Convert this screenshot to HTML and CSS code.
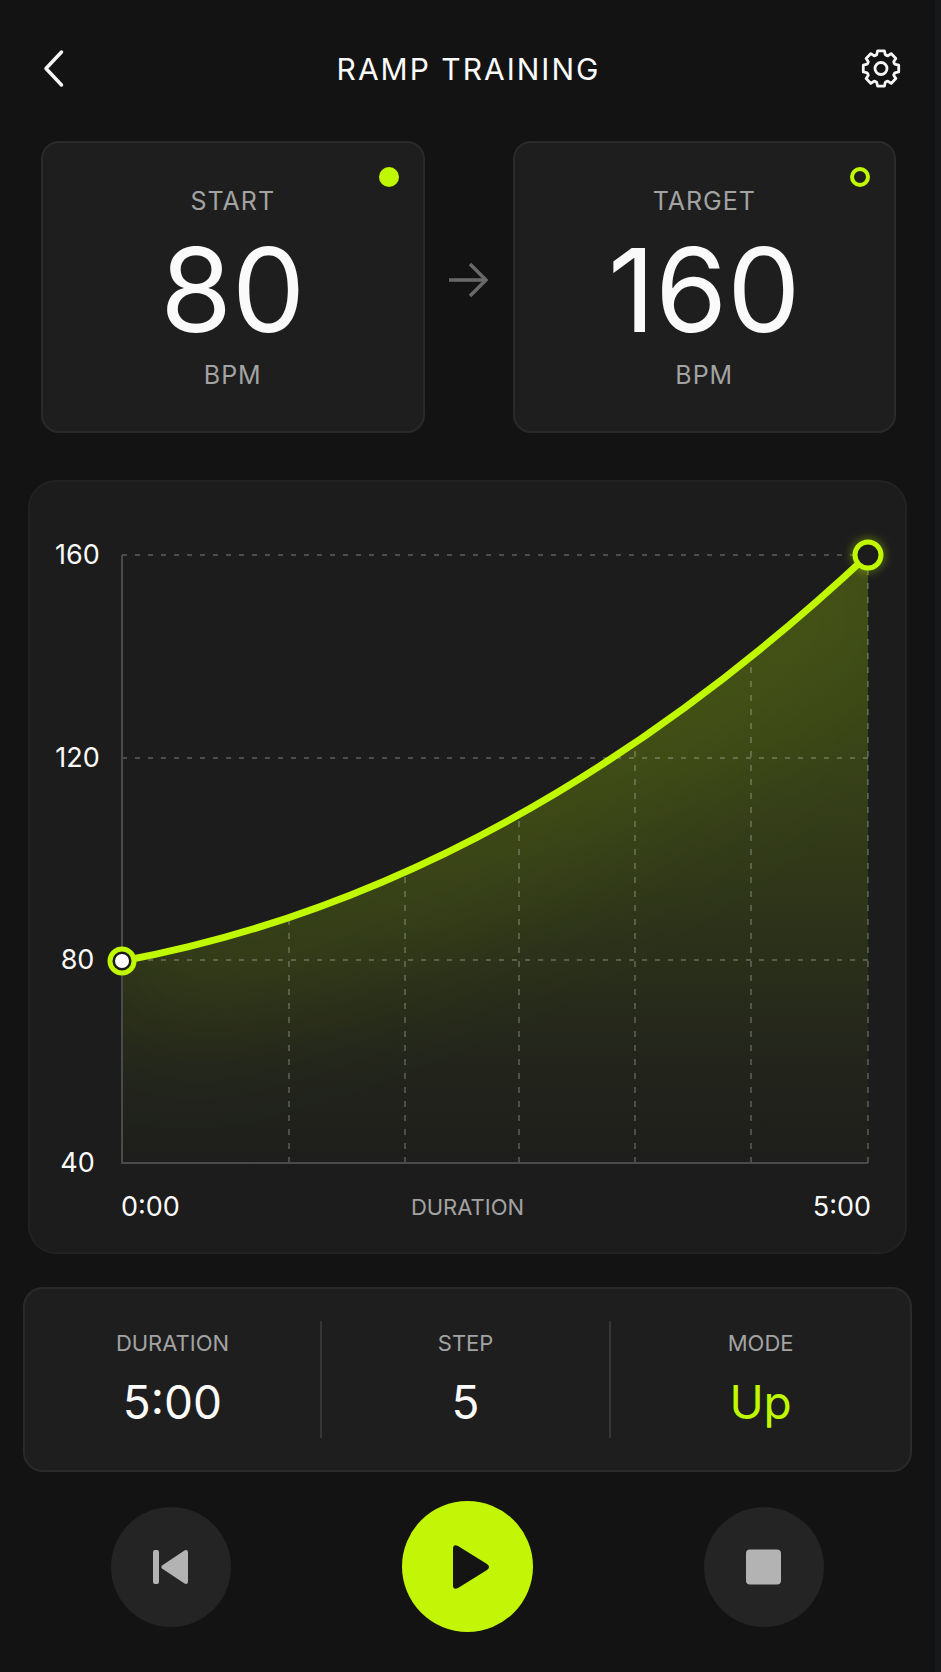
FILE: index.html
```html
<!DOCTYPE html>
<html lang="en">
<head>
  <meta charset="UTF-8">
  <meta name="viewport" content="width=device-width, initial-scale=1.0">
  <title>Ramp Training</title>
  <link rel="stylesheet" href="styles.css">
</head>
<body>
  <main class="screen">
    <header class="header">
      <button class="icon-button" aria-label="Back">
        <svg width="40" height="40" viewBox="0 0 40 40">
          <path d="M25.500 3 10 19.500 25.500 36" fill="none" stroke="#f5f5f5" stroke-width="3.500" stroke-linecap="round" stroke-linejoin="round"/>
        </svg>
      </button>
      <h1>RAMP TRAINING</h1>
      <button class="icon-button" aria-label="Settings">
        <svg width="40" height="40" viewBox="-20 -19.500 40 40">
          <g fill="none" stroke="#f5f5f5" stroke-width="2.800" stroke-linejoin="round">
            <path d="M-3.400-17.700H3.400L4.300-13.800Q5.500-12.900 6.800-12.700L10.100-14.900 14.900-10.100 12.700-6.800Q12.900-5.500 13.800-4.300L17.700-3.400V3.400L13.800 4.300Q12.900 5.500 12.700 6.800L14.900 10.100 10.100 14.900 6.800 12.700Q5.500 12.900 4.300 13.800L3.400 17.700H-3.400L-4.300 13.800Q-5.500 12.900-6.800 12.700L-10.100 14.900-14.900 10.100-12.700 6.800Q-12.900 5.500-13.800 4.300L-17.700 3.400V-3.400L-13.800-4.300Q-12.900-5.500-12.700-6.800L-14.900-10.100-10.100-14.900-6.800-12.700Q-5.500-12.900-4.300-13.800Z"/>
            <circle r="6"/>
          </g>
        </svg>
      </button>
    </header>

    <section class="tempo">
      <div class="tempo-card">
        <span class="dot"></span>
        <span class="tempo-label">START</span>
        <span class="tempo-value">80</span>
        <span class="tempo-label">BPM</span>
      </div>
      <svg class="arrow" width="40" height="36" viewBox="0 0 40 36">
        <path d="M0 18H37M21 2 37 18 21 34" fill="none" stroke="#696969" stroke-width="3.500"/>
      </svg>
      <div class="tempo-card">
        <span class="dot hollow"></span>
        <span class="tempo-label">TARGET</span>
        <span class="tempo-value">160</span>
        <span class="tempo-label">BPM</span>
      </div>
    </section>

    <section class="chart">
      <div class="y-axis">
        <span>160</span>
        <span>120</span>
        <span>80</span>
        <span>40</span>
      </div>
      <svg class="plot" viewBox="0 0 746 608">
        <defs>
          <linearGradient id="fill" x1="0" y1="0" x2="0" y2="608" gradientUnits="userSpaceOnUse">
            <stop offset="0" stop-color="#bff800" stop-opacity="0.200"/>
            <stop offset="0.300" stop-color="#bff800" stop-opacity="0.175"/>
            <stop offset="0.520" stop-color="#bff800" stop-opacity="0.125"/>
            <stop offset="0.670" stop-color="#bff800" stop-opacity="0.085"/>
            <stop offset="0.830" stop-color="#bff800" stop-opacity="0.040"/>
            <stop offset="1" stop-color="#bff800" stop-opacity="0.010"/>
          </linearGradient>
          <clipPath id="area">
            <path d="M0 406Q389 334 746 0V608H0Z"/>
          </clipPath>
          <filter id="soft" filterUnits="userSpaceOnUse" x="-300" y="-300" width="1346" height="1208">
            <feGaussianBlur stdDeviation="60"/>
          </filter>
          <filter id="glow" x="-50%" y="-50%" width="200%" height="200%">
            <feGaussianBlur stdDeviation="4"/>
          </filter>
        </defs>

        <g clip-path="url(#area)">
          <rect width="746" height="608" fill="url(#fill)"/>
          <path d="M0 406Q389 334 746 0" fill="none" stroke="#bff800" stroke-opacity="0.080" stroke-width="160" filter="url(#soft)"/>
        </g>

        <path class="grid" d="M0 0H746M0 203H746M0 405H746"/>
        <g clip-path="url(#area)">
          <path class="grid vertical" d="M167 608V0M283 608V0M397 608V0M513 608V0M629 608V0"/>
        </g>
        <path class="grid vertical" d="M746 608V0"/>
        <path class="axis" d="M0 0V608H746"/>

        <path class="curve" d="M0 406Q389 334 746 0"/>
        <circle cx="0" cy="406" r="12" fill="#1c1c1c" stroke="#bff800" stroke-width="5"/>
        <circle cx="0" cy="406" r="7" fill="#fff"/>
        <circle cx="746" cy="0" r="14" fill="none" stroke="#bff800" stroke-opacity="0.450" stroke-width="5" filter="url(#glow)"/>
        <circle cx="746" cy="0" r="13" fill="#1c1c1c" stroke="#bff800" stroke-width="5"/>
      </svg>
      <div class="x-axis">
        <span>0:00</span>
        <span class="x-title">DURATION</span>
        <span>5:00</span>
      </div>
    </section>

    <section class="summary">
      <div class="stat">
        <span class="stat-label">DURATION</span>
        <span class="stat-value">5:00</span>
      </div>
      <div class="stat">
        <span class="stat-label">STEP</span>
        <span class="stat-value">5</span>
      </div>
      <div class="stat">
        <span class="stat-label">MODE</span>
        <span class="stat-value accent">Up</span>
      </div>
    </section>

    <footer class="controls">
      <button class="control" aria-label="Restart">
        <svg width="36" height="36" viewBox="0 0 36 36" fill="#b3b3b3">
          <rect x="0" y="1" width="6" height="34" rx="2"/>
          <path d="M9 16.500 31.500 1.500Q35 0 35 4V32Q35 36 31.500 34.500L9 19.500Q7.500 18 9 16.500Z"/>
        </svg>
      </button>
      <button class="control play" aria-label="Play">
        <svg width="44" height="44" viewBox="-1 0 44 44" fill="#141414">
          <path d="M6 4Q6-1.500 11 1L40 19Q44 22 40 25L11 43Q6 45.500 6 40Z"/>
        </svg>
      </button>
      <button class="control" aria-label="Stop">
        <svg width="36" height="36" viewBox="0 0 36 36" fill="#b3b3b3">
          <rect width="35" height="35" x="0" y="0.500" rx="4"/>
        </svg>
      </button>
    </footer>
  </main>
</body>
</html>
```
FILE: styles.css
```css
* {
  box-sizing: border-box;
}
body {
  margin: 0;
  background: #17181a;
  color: #fafafa;
  font-family: Inter, "Liberation Sans", sans-serif;
}
.screen {
  margin-right: 6px;
  min-height: 100vh;
  padding-bottom: 38px;
  background: #131313;
}
button {
  border: none;
  padding: 0;
  background: none;
  cursor: pointer;
}
svg {
  display: block;
}
.header {
  display: flex;
  align-items: center;
  justify-content: space-between;
  padding: 48px 34px 0 36px;
}
.header h1 {
  margin: 0;
  font-size: 30px;
  line-height: 42px;
  font-weight: 400;
  letter-spacing: 2px;
}
.tempo {
  display: grid;
  grid-template-columns: 1fr 88px 1fr;
  padding: 51px 39px 0 41px;
}
.tempo-card {
  position: relative;
  display: flex;
  flex-direction: column;
  align-items: center;
  padding: 42px 0 40px;
  border: 2px solid #2a2a2a;
  border-radius: 18px;
  background: #1e1e1e;
}
.tempo-label {
  color: #a3a3a3;
  font-size: 25px;
  line-height: 32px;
  letter-spacing: 1px;
}
.tempo-value {
  margin: 11px 0 7px;
  font-size: 116px;
  line-height: 124px;
}
.arrow {
  align-self: center;
  justify-self: center;
  margin-bottom: 14px;
}
.dot {
  position: absolute;
  top: 24px;
  right: 24px;
  width: 20px;
  height: 20px;
  border-radius: 50%;
  background: #bff800;
}
.dot.hollow {
  border: 4px solid #bff800;
  background: none;
}
.chart {
  display: grid;
  grid-template-columns: 72px 1fr;
  column-gap: 20px;
  margin: 47px 28px 0;
  padding: 73px 37px 31px 0;
  border: 2px solid #222;
  border-radius: 28px;
  background: #1c1c1c;
  font-size: 27px;
  line-height: 28px;
}
.y-axis {
  display: flex;
  flex-direction: column;
  justify-content: space-between;
  align-items: center;
  margin: -14px 0;
  padding-left: 23px;
}
.plot {
  width: 100%;
  height: auto;
  overflow: visible;
}
.grid {
  fill: none;
  stroke: #fff;
  stroke-opacity: 0.22;
  stroke-width: 2;
  stroke-dasharray: 5 8;
}
.vertical {
  stroke-width: 1.5;
  stroke-opacity: 0.28;
  stroke-dasharray: 6 8;
}
.axis {
  fill: none;
  stroke: #4a4a4a;
  stroke-width: 2;
}
.curve {
  fill: none;
  stroke: #bff800;
  stroke-width: 7;
}
.x-axis {
  grid-column: 1 / -1;
  display: grid;
  grid-template-columns: 1fr auto 1fr;
  margin: 30px -37px 0 0;
  padding: 0 34px;
}
.x-axis span:first-child {
  padding-left: 57px;
}
.x-axis span:last-child {
  text-align: right;
}
.x-title {
  color: #a3a3a3;
  font-size: 22px;
}
.summary {
  display: grid;
  grid-template-columns: 102fr 100fr 104fr;
  margin: 33px 23px 0;
  padding: 32px 0;
  border: 2px solid #2a2a2a;
  border-radius: 20px;
  background: #1e1e1e;
}
.stat {
  display: flex;
  flex-direction: column;
  align-items: center;
  padding: 8px 0 7px;
}
.stat + .stat {
  border-left: 2px solid #363636;
}
.stat-label {
  color: #a3a3a3;
  font-size: 22px;
  line-height: 28px;
}
.stat-value {
  margin-top: 16px;
  font-size: 46px;
  line-height: 58px;
}
.accent {
  color: #bff800;
}
.controls {
  display: flex;
  align-items: center;
  justify-content: space-between;
  margin-top: 29px;
  padding: 0 111px;
}
.control {
  display: flex;
  align-items: center;
  justify-content: center;
  width: 120px;
  height: 120px;
  border-radius: 50%;
  background: #242424;
}
.control.play {
  width: 131px;
  height: 131px;
  background: #c3f507;
}
```
